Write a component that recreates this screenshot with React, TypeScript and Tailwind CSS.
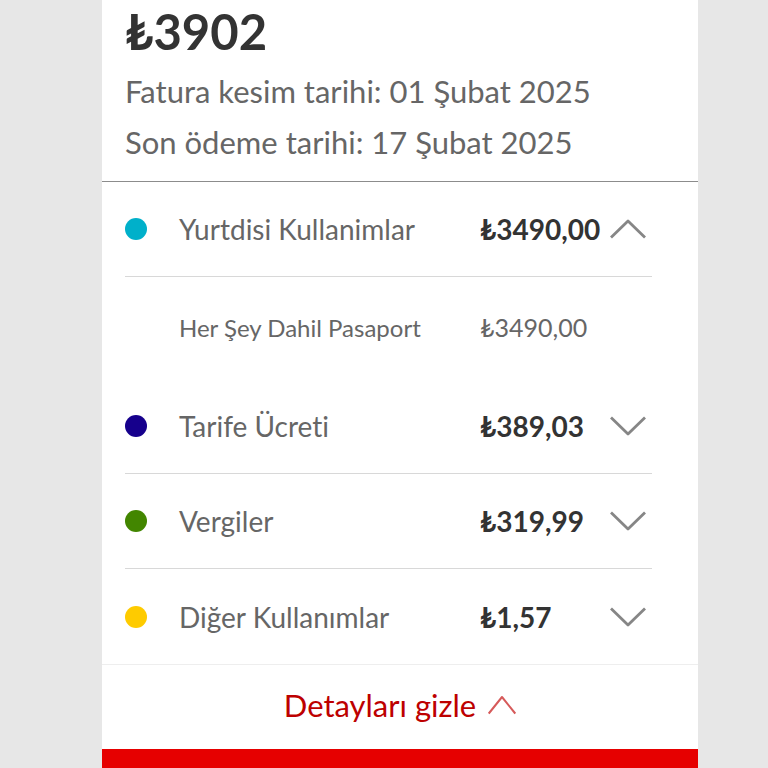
import { useState } from "react";

type Detail = { name: string; amount: string };

type Charge = {
  id: string;
  name: string;
  amount: string;
  dot: string;
  details: Detail[];
};

const charges: Charge[] = [
  {
    id: "yurtdisi",
    name: "Yurtdisi Kullanimlar",
    amount: "₺3490,00",
    dot: "bg-[#00b0ca]",
    details: [{ name: "Her Şey Dahil Pasaport", amount: "₺3490,00" }],
  },
  { id: "tarife", name: "Tarife Ücreti", amount: "₺389,03", dot: "bg-[#16008c]", details: [] },
  { id: "vergiler", name: "Vergiler", amount: "₺319,99", dot: "bg-[#428600]", details: [] },
  { id: "diger", name: "Diğer Kullanımlar", amount: "₺1,57", dot: "bg-[#fecb00]", details: [] },
];

const rowGrid = "grid w-full grid-cols-[54px_1fr_130px_42px] items-center text-left";

function Chevron({ up, className }: { up?: boolean; className: string }) {
  return (
    <svg
      viewBox="0 0 36 20"
      preserveAspectRatio="none"
      fill="none"
      stroke="currentColor"
      strokeLinejoin="round"
      className={className}
      aria-hidden="true"
    >
      <path
        vectorEffect="non-scaling-stroke"
        d={up ? "M1 18.5 18 2 35 18.5" : "M1 1.5 18 18 35 1.5"}
      />
    </svg>
  );
}

export default function App() {
  const [openId, setOpenId] = useState<string | null>("yurtdisi");
  const [showDetails, setShowDetails] = useState(true);

  return (
    <div className="flex min-h-screen flex-col bg-[#e7e7e7] pr-[70px] pl-[102px] font-['Lato','Noto_Sans',sans-serif] text-[#666666] [font-variant-ligatures:none]">
      <main className="bg-white">
        <header className="border-b border-[#8c8c8c] px-[23px] pb-[13px]">
          <h1 className="pb-1 text-[49px] leading-[62px] font-bold text-[#333333]">₺3902</h1>
          <p className="text-[31px] leading-[51px]">Fatura kesim tarihi: 01 Şubat 2025</p>
          <p className="text-[31px] leading-[51px]">Son ödeme tarihi: 17 Şubat 2025</p>
        </header>

        {showDetails && (
          <ul className="border-b border-[#eeeeee] pr-[46px] pl-[23px]">
            {charges.map((charge, index) => {
              const isOpen = openId === charge.id;
              const isLast = index === charges.length - 1;
              return (
                <li key={charge.id}>
                  <button
                    type="button"
                    aria-expanded={isOpen}
                    onClick={() => setOpenId(isOpen ? null : charge.id)}
                    className={`${rowGrid} h-[95px] text-[28px] ${
                      isLast ? "" : "border-b border-[#d8d8d8]"
                    }`}
                  >
                    <span className={`size-[22px] rounded-full ${charge.dot}`} />
                    <span>{charge.name}</span>
                    <span className="font-bold text-[#333333]">{charge.amount}</span>
                    <Chevron up={isOpen} className="h-5 w-9 stroke-[2.8] text-[#868686]" />
                  </button>
                  {isOpen &&
                    charge.details.map((detail) => (
                      <div key={detail.name} className={`${rowGrid} h-[102px] text-[24px]`}>
                        <span className="col-start-2">{detail.name}</span>
                        <span className="text-[25px]">{detail.amount}</span>
                      </div>
                    ))}
                </li>
              );
            })}
          </ul>
        )}

        <button
          type="button"
          aria-expanded={showDetails}
          onClick={() => setShowDetails(!showDetails)}
          className="flex h-[84px] w-full items-center justify-center gap-3 pb-1 text-[31px] text-[#bd0000]"
        >
          {showDetails ? "Detayları gizle" : "Detayları göster"}
          <Chevron up={showDetails} className="h-5 w-7 stroke-2 text-[#d65a5a]" />
        </button>
      </main>
      <footer className="min-h-5 flex-1 bg-[#e60000]" />
    </div>
  );
}
